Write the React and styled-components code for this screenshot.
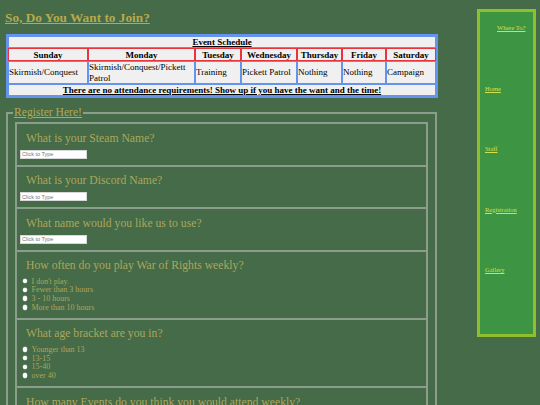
import React from 'react'
import styled, { createGlobalStyle } from 'styled-components'

const GlobalStyle = createGlobalStyle`
  * { box-sizing: border-box; }
  body {
    margin: 0;
    background: #456b48;
    font-family: "Liberation Serif", "Times New Roman", serif;
  }
`

const days = ['Sunday', 'Monday', 'Tuesday', 'Wednesday', 'Thursday', 'Friday', 'Saturday']
const events = ['Skirmish/Conquest', 'Skirmish/Conquest/Pickett Patrol', 'Training', 'Pickett Patrol', 'Nothing', 'Nothing', 'Campaign']
const colWidths = [80, 107, 46, 56, 45, 44, 50]

const questions = [
  { title: 'What is your Steam Name?', type: 'text' },
  { title: 'What is your Discord Name?', type: 'text' },
  { title: 'What name would you like us to use?', type: 'text' },
  { title: 'How often do you play War of Rights weekly?', options: ["I don't play.", 'Fewer than 3 hours', '3 - 10 hours', 'More than 10 hours'] },
  { title: 'What age bracket are you in?', options: ['Younger than 13', '13-15', '15-40', 'over 40'] },
  { title: 'How many Events do you think you would attend weekly?', options: ['None', '1 - 2', '3 - 4', '5 or more'] },
]

const links = ['Home', 'Staff', 'Registration', 'Gallery']

const Page = styled.div`
  display: flex;
  align-items: flex-start;
`

const Main = styled.main`
  width: 431px;
  margin-left: 6px;
`

const Title = styled.h1`
  margin: 10px 0 0 -1px;
  font-size: 13.3px;
  line-height: 15px;
  font-weight: bold;
  color: #b8a94d;
  text-decoration: underline;
`

const Schedule = styled.table`
  width: 431px;
  margin-top: 9px;
  table-layout: fixed;
  border-collapse: separate;
  border-spacing: 0;
  border: 2px solid #6494ed;
  background: #f0f0f0;
  color: #000;
  font-size: 9px;
`

const Cell = styled.td`
  border: 1px solid #6494ed;
  padding: 0;
  text-align: ${p => (p.$center ? 'center' : 'left')};
  font-weight: ${p => (p.$bold ? 'bold' : 'normal')};
  text-decoration: ${p => (p.$bold ? 'underline' : 'none')};
  vertical-align: middle;
  line-height: 10.3px;
`

const DayHead = styled.th`
  border: 1px solid #e8343a;
  padding: 0;
  height: 13px;
  font-weight: bold;
  text-align: center;
  line-height: 10.3px;
`

const Register = styled.fieldset`
  margin: 8px 0 0;
  padding: 0 7px;
  border: 2px solid #8b9d8b;
  min-width: 0;
`

const Legend = styled.legend`
  margin-left: -2px;
  padding: 0 1px;
  font-size: 11.6px;
  color: #b3a955;
  text-decoration: underline;
`

const Questions = styled.div`
  margin-top: 3px;
  border: 2px solid #8b9d8b;
  border-bottom: none;
`

const Question = styled.section`
  padding: 7.5px 3px 6px;
  border-bottom: 2px solid #8b9d8b;
`

const Ask = styled.h3`
  margin: 0 0 ${p => (p.$list ? '4.5px' : '5px')} 6px;
  font-size: 11.7px;
  font-weight: normal;
  color: #aca75b;
`

const TextBox = styled.input`
  display: block;
  width: 67px;
  height: 9px;
  margin: 0;
  padding: 0 1px;
  border: 1px solid #d8d8d8;
  background: #fff;
  font-family: "Liberation Sans", Arial, sans-serif;
  font-size: 5.5px;
  &::placeholder { color: #777; }
`

const Options = styled.ul`
  margin: 0;
  padding: 0;
  list-style: none;
`

const Option = styled.li`
  display: flex;
  align-items: center;
  height: 8.8px;
  font-size: 8px;
  color: #ada65a;
`

const Dot = styled.span`
  width: 4.5px;
  height: 4.5px;
  margin: 0 4.3px 0 2.7px;
  border-radius: 50%;
  background: #fff;
  box-shadow: 0 0 0 0.4px #bbb;
`

const Sidebar = styled.nav`
  width: 59px;
  height: 328px;
  margin: 9px 0 0 40px;
  padding: 12px 0 0 5px;
  border: 3px solid #90bf2e;
  background: #3d9543;
  display: flex;
  flex-direction: column;
  gap: 53px;
  font-size: 6.5px;
  line-height: 7.5px;
`

const NavLink = styled.a`
  color: #d2e04c;
  text-decoration: underline;
  margin-left: ${p => (p.$head ? '12px' : '0')};
  cursor: pointer;
`

export default function App() {
  return (
    <>
      <GlobalStyle />
      <Page>
        <Main>
          <Title>So, Do You Want to Join?</Title>
          <Schedule>
            <colgroup>
              {colWidths.map((w, i) => <col key={i} style={{ width: w }} />)}
            </colgroup>
            <tbody>
              <tr>
                <Cell colSpan={7} $center $bold>Event Schedule</Cell>
              </tr>
              <tr>
                {days.map(d => <DayHead key={d}>{d}</DayHead>)}
              </tr>
              <tr>
                {events.map((e, i) => <Cell key={i}>{e}</Cell>)}
              </tr>
              <tr>
                <Cell colSpan={7} $center $bold>There are no attendance requirements! Show up if you have the want and the time!</Cell>
              </tr>
            </tbody>
          </Schedule>
          <Register>
            <Legend>Register Here!</Legend>
            <Questions>
              {questions.map(q => (
                <Question key={q.title}>
                  <Ask $list={!!q.options}>{q.title}</Ask>
                  {q.options ? (
                    <Options>
                      {q.options.map(o => (
                        <Option key={o}><Dot />{o}</Option>
                      ))}
                    </Options>
                  ) : (
                    <TextBox type="text" placeholder="Click to Type" />
                  )}
                </Question>
              ))}
            </Questions>
          </Register>
        </Main>
        <Sidebar>
          <NavLink $head>Where To?</NavLink>
          {links.map(l => <NavLink key={l}>{l}</NavLink>)}
        </Sidebar>
      </Page>
    </>
  )
}
